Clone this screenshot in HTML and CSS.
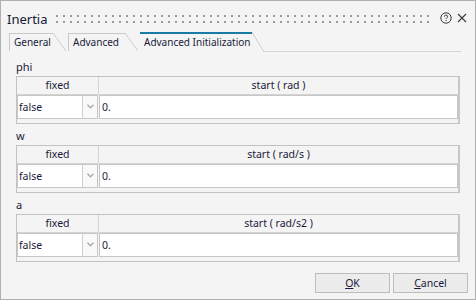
FILE: index.html
```html
<!DOCTYPE html>
<html>
<head>
<meta charset="utf-8">
<link rel="stylesheet" href="styles.css">
</head>
<body>
<div class="window">
  <div class="titlebar">
    <span class="title">Inertia</span>
    <div class="grip"></div>
    <svg class="help" width="12" height="12" viewBox="0 0 12 12">
      <circle cx="6" cy="6" r="5.2" fill="none" stroke="#3a3a3a" stroke-width="1"/>
      <path d="M4.4 4.7 A1.6 1.6 0 1 1 6.6 6.1 Q6 6.4 6 7.2" fill="none" stroke="#3a3a3a" stroke-width="1"/>
      <rect x="5.5" y="8.1" width="1" height="1" fill="#3a3a3a"/>
    </svg>
    <svg class="close" width="10" height="10" viewBox="0 0 10 10">
      <path d="M1 1 L9 9 M9 1 L1 9" stroke="#3a3a3a" stroke-width="1.1"/>
    </svg>
  </div>
  <div class="tabs">
    <div class="tab tab-general">General</div>
    <div class="tab tab-advanced">Advanced</div>
    <div class="tab tab-active">Advanced Initialization</div>
    <div class="tabline"></div>
  </div>
  <div class="content">
    <div class="section">
      <div class="label">phi</div>
      <div class="grid">
        <div class="hcell hcell-first">fixed</div>
        <div class="hcell">start ( rad )</div>
        <div class="select"><span class="select-text">false</span><span class="select-btn"><svg width="7" height="5" viewBox="0 0 7 5"><path d="M0.5 0.8 L3.5 3.8 L6.5 0.8" fill="none" stroke="#a8a8a8" stroke-width="1.3"/></svg></span></div>
        <div class="input">0.</div>
      </div>
    </div>
    <div class="section">
      <div class="label">w</div>
      <div class="grid">
        <div class="hcell hcell-first">fixed</div>
        <div class="hcell">start ( rad/s )</div>
        <div class="select"><span class="select-text">false</span><span class="select-btn"><svg width="7" height="5" viewBox="0 0 7 5"><path d="M0.5 0.8 L3.5 3.8 L6.5 0.8" fill="none" stroke="#a8a8a8" stroke-width="1.3"/></svg></span></div>
        <div class="input">0.</div>
      </div>
    </div>
    <div class="section">
      <div class="label">a</div>
      <div class="grid">
        <div class="hcell hcell-first">fixed</div>
        <div class="hcell">start ( rad/s2 )</div>
        <div class="select"><span class="select-text">false</span><span class="select-btn"><svg width="7" height="5" viewBox="0 0 7 5"><path d="M0.5 0.8 L3.5 3.8 L6.5 0.8" fill="none" stroke="#a8a8a8" stroke-width="1.3"/></svg></span></div>
        <div class="input">0.</div>
      </div>
    </div>
  </div>
  <div class="footer">
    <button class="btn"><u>O</u>K</button>
    <button class="btn"><u>C</u>ancel</button>
  </div>
</div>
</body>
</html>
```
FILE: styles.css
```css
* { box-sizing: border-box; }
html, body { margin: 0; padding: 0; }
body {
  font-family: "Noto Sans", "Open Sans", sans-serif;
  font-size: 10px;
  color: #1a1a3a;
  background: #f4f4f4;
}
.window {
  width: 476px;
  height: 300px;
  border: 1px solid #b0b0b0;
  background: #f4f4f4;
  display: flex;
  flex-direction: column;
}
.titlebar {
  height: 30px;
  padding: 4px 8px 0 6px;
  display: flex;
  align-items: center;
}
.title {
  font-size: 13px;
  line-height: 18px;
  margin-top: 2px;
}
.grip {
  flex: 1;
  height: 8px;
  margin: 2px 0 0 9px;
  background-image: conic-gradient(from 270deg at 2px 2px, #9a9a9a 25%, transparent 0);
  background-size: 7px 6px;
}
.help { margin-left: 6px; }
.close { margin-left: 5px; }
.tabs {
  height: 21px;
  display: flex;
  align-items: flex-end;
  padding-left: 8px;
  padding-right: 14px;
}
.tab {
  position: relative;
  height: 18px;
  margin-bottom: 1px;
  padding-left: 4px;
  border-left: 1px solid #c8c8c8;
  line-height: 18px;
  white-space: nowrap;
  margin-right: 2px;
}
.tab::before {
  content: "";
  position: absolute;
  left: 0;
  right: 13px;
  top: 0;
  height: 1px;
  background: #c8c8c8;
}
.tab::after {
  content: "";
  position: absolute;
  right: 0;
  top: 0;
  width: 13px;
  height: 100%;
  background: linear-gradient(to top right, transparent calc(50% - 0.7px), #c8c8c8 50%, transparent calc(50% + 0.7px));
}
.tab-general { width: 57px; }
.tab-advanced { width: 70px; margin-right: 2px; }
.tab-active {
  width: 124px;
  height: 20px;
  margin-bottom: 0;
  border-left: none;
  padding-left: 4px;
  padding-top: 2px;
  line-height: 17px;
  margin-right: 0;
}
.tab-active::before {
  right: 12px;
  height: 2px;
  background: #1a7aa6;
}
.tab-active::after {
  width: 12px;
}
.tabline {
  flex: 1;
  height: 1px;
  background: #d6d6d6;
}
.content {
  flex: 1;
  padding: 8px 15px 0 15px;
  display: flex;
  flex-direction: column;
  gap: 5px;
}
.label {
  height: 16px;
  line-height: 14px;
  font-size: 11px;
}
.grid {
  display: grid;
  grid-template-columns: 82px 1fr;
  border: 1px solid #c2c2c2;
  border-right: 2px solid #c8c8c8;
  padding-bottom: 4px;
  font-size: 10.5px;
}
.hcell {
  height: 18px;
  line-height: 17px;
  text-align: center;
  border-bottom: 1px solid #d4d4d4;
}
.hcell-first { border-right: 1px solid #d4d4d4; }
.select {
  height: 24px;
  margin-right: 1px;
  display: flex;
  border: 1px solid #c6c6c6;
  background: #fff;
}
.select-text {
  flex: 1;
  padding-left: 1px;
  line-height: 22px;
}
.select-btn {
  width: 15px;
  border-left: 1px solid #d0d0d0;
  background: #f9f9f9;
  display: flex;
  align-items: center;
  justify-content: center;
  padding-bottom: 1px;
}
.input {
  height: 24px;
  border: 1px solid #c6c6c6;
  background: #fff;
  padding-left: 2px;
  line-height: 22px;
}
.footer {
  display: flex;
  justify-content: flex-end;
  gap: 3px;
  padding: 0 7px 6px 0;
}
.btn {
  width: 75px;
  height: 20px;
  border: 1px solid #bdbdbd;
  background: #ececec;
  font-family: inherit;
  font-size: 10.5px;
  color: #1a1a3a;
  padding: 0;
  line-height: 18px;
}
.btn u { text-decoration: underline; }
```
